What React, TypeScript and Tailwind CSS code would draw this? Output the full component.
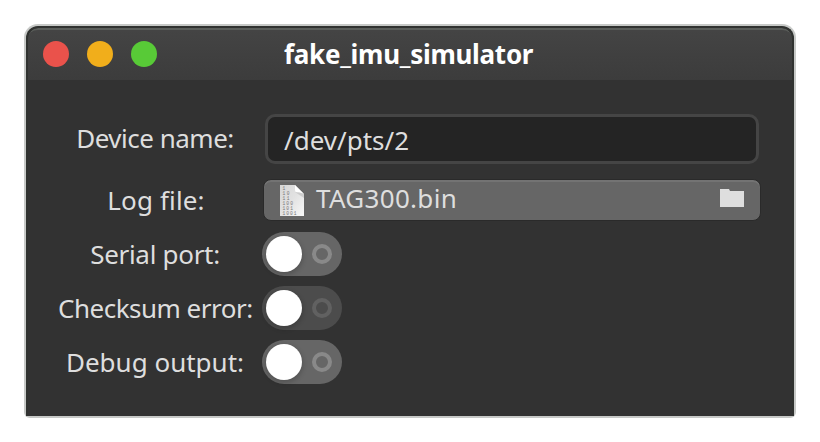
import React from 'react';

function FileIcon() {
  return (
    <svg width="24" height="31" viewBox="0 0 24 31" className="shrink-0">
      <defs>
        <linearGradient id="paper" x1="0" y1="0" x2="1" y2="1">
          <stop offset="0" stopColor="#d6d6d6" />
          <stop offset="0.5" stopColor="#e2e2e2" />
          <stop offset="1" stopColor="#f8f8f8" />
        </linearGradient>
      </defs>
      <path d="M0 0H15L24 9V31H0Z" fill="url(#paper)" />
      <path d="M15 0V5Q15 7 17 7.500Q22 7 24 9Z" fill="#ffffff" />
      <path d="M15 7Q20 7 24 9V13Z" fill="#bdbdbd" opacity="0.6" />
      <g fill="#777777" fontFamily="'Liberation Mono', monospace" fontSize="4.600">
        <text x="2.500" y="5">1</text>
        <text x="2.500" y="10" textLength="7">10</text>
        <text x="2.500" y="15" textLength="7">11</text>
        <text x="2.500" y="20" textLength="10.500">100</text>
        <text x="2.500" y="25" textLength="10.500">101</text>
        <text x="2.500" y="30" textLength="14">1001</text>
      </g>
    </svg>
  );
}

function FolderIcon() {
  return (
    <svg width="24" height="18" viewBox="0 0 24 18" className="shrink-0">
      <path d="M0 0H9L10 2H24V18H0Z" fill="#dedede" />
    </svg>
  );
}

function Toggle({ dim = false }: { dim?: boolean }) {
  return (
    <div
      className={`flex h-11 w-20 items-center justify-between rounded-full pl-1 pr-2.5 ${
        dim ? 'bg-[#4c4c4c]' : 'bg-[#666666]'
      }`}
    >
      <div className="size-9 rounded-full bg-white shadow-[0_2px_5px_1px_rgba(0,0,0,0.18)]" />
      <div className={`size-5 rounded-full border-4 ${dim ? 'border-[#616161]' : 'border-[#898989]'}`} />
    </div>
  );
}

function Label({ children, className }: { children: string; className: string }) {
  return <div className={`w-[196px] whitespace-nowrap text-center ${className}`}>{children}</div>;
}

export default function App() {
  return (
    <div className="h-[442px] w-[820px] overflow-hidden bg-white px-6 pt-6 font-['Noto_Sans',sans-serif] text-[26px] leading-9 text-[#dedede]">
      <div className="h-[394px] w-[772px] rounded-t-[14px] rounded-b-[6px] bg-[#c7c9c7] px-0.5 pt-0.5">
        <div className="h-[390px] w-[768px] overflow-hidden rounded-t-xl border-x-2 border-t-2 border-[#303230] bg-[#323232]">
          <header className="flex h-[52px] items-center rounded-t-[10px] border-t-2 border-[#5b5e5b] bg-linear-to-b from-[#444444] to-[#3c3c3c] pb-0.5 pl-[15px]">
            <div className="flex gap-[18px]">
              <span className="size-[26px] rounded-full bg-[#ea524b]" />
              <span className="size-[26px] rounded-full bg-[#f1ae1b]" />
              <span className="size-[26px] rounded-full bg-[#58ca37]" />
            </div>
            <h1 className="ml-[127px] whitespace-nowrap text-[26px] font-bold tracking-[-0.28px] text-white">fake_imu_simulator</h1>
          </header>
          <main className="flex flex-col pl-[30px] pt-[34px]">
            <div className="flex h-[50px] items-center">
              <Label className="pb-0.5 pr-0.5 tracking-[-0.5px]">Device name:</Label>
              <div className="ml-[11px] flex h-[50px] w-[494px] items-center rounded-[10px] border-[3px] border-[#454545] bg-[#242424] pl-4 pt-0.5">
                <span className="whitespace-nowrap tracking-[0px]">/dev/pts/2</span>
              </div>
            </div>
            <div className="mt-[15px] flex h-[42px] items-center">
              <Label className="tracking-[0.15px]">Log file:</Label>
              <div className="ml-[9px] flex h-[42px] w-[498px] items-center rounded-lg border border-[#2a2a2a] bg-[#666666] pl-4 pr-4 shadow-[inset_0_2px_0_#737373]">
                <FileIcon />
                <span className="ml-3 whitespace-nowrap pb-1 tracking-[0.3px]">TAG300.bin</span>
                <span className="ml-auto pb-1">
                  <FolderIcon />
                </span>
              </div>
            </div>
            <div className="mt-[11px] flex h-11 items-center gap-2">
              <Label className="pr-0.5 tracking-[-0.3px]">Serial port:</Label>
              <Toggle />
            </div>
            <div className="mt-2.5 flex h-11 items-center gap-2">
              <Label className="pr-0.5 tracking-[-0.5px]">Checksum error:</Label>
              <Toggle dim />
            </div>
            <div className="mt-2.5 flex h-11 items-center gap-2">
              <Label className="pr-0.5 tracking-[0px]">Debug output:</Label>
              <Toggle />
            </div>
          </main>
        </div>
      </div>
    </div>
  );
}
